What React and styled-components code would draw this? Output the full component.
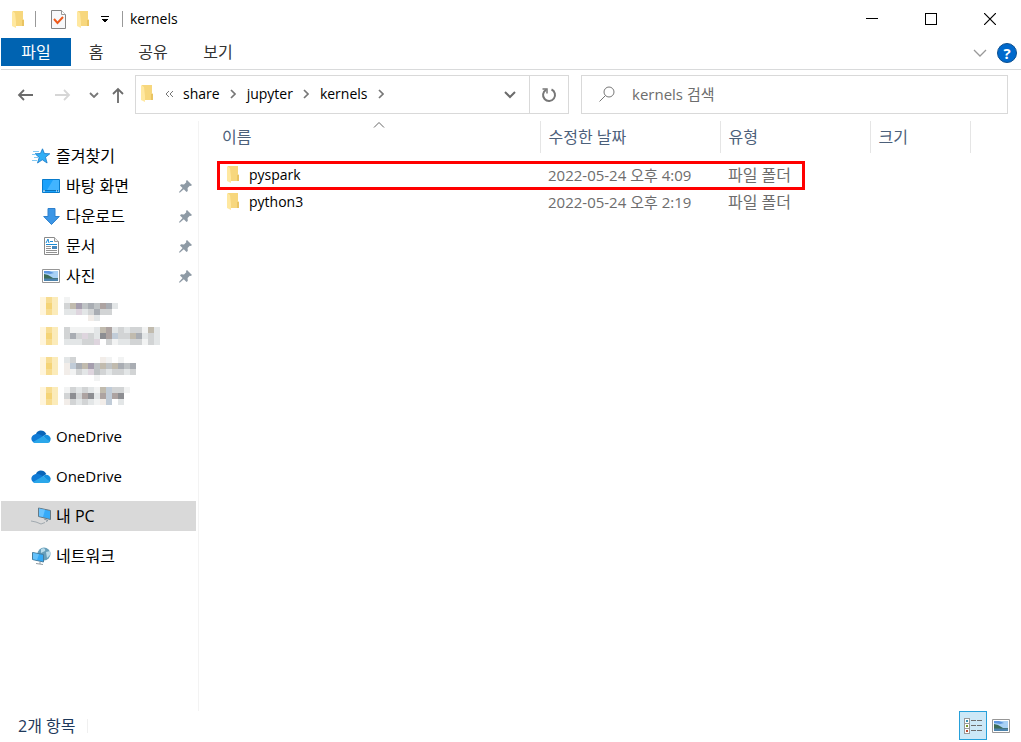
import React from "react";
import styled, { createGlobalStyle } from "styled-components";

const GlobalStyle = createGlobalStyle`
  *, *::after { box-sizing: border-box; }
  body {
    margin: 0;
    background: #fff;
    color: #000;
    font-family: "Open Sans", "Noto Sans CJK KR", sans-serif;
    font-size: 15px;
    line-height: 20px;
  }
  button, input { font: inherit; color: inherit; }
`;

const Window = styled.div`
  display: flex;
  flex-direction: column;
  min-height: 100vh;
  padding-left: 1px;
`;

const PlainButton = styled.button`
  display: flex;
  align-items: center;
  justify-content: center;
  flex: none;
  padding: 0;
  border: 0;
  background: none;
`;

/* Title bar */
const TitleBar = styled.header`
  display: flex;
  align-items: center;
  height: 38px;
  padding: 0 2px 0 10px;
`;
const QuickButton = styled(PlainButton)`
  width: ${(p) => p.$width}px;
  height: 24px;
`;
const Divider = styled.span`
  width: 1px;
  height: 16px;
  margin: 0 ${(p) => p.$right}px 0 ${(p) => p.$left}px;
  background: #999;
`;
const Title = styled.h1`
  flex: 1;
  margin: 0;
  font-size: 14px;
  font-weight: 400;
`;
const CaptionButton = styled(PlainButton)`
  width: 59px;
  height: 38px;
`;

/* Ribbon tabs */
const Ribbon = styled.div`
  display: flex;
  align-items: flex-start;
  height: 32px;
  border-bottom: 1px solid #d9dadb;
`;
const RibbonTab = styled(PlainButton)`
  width: ${(p) => p.$width}px;
  height: 28px;
  font-size: 16px;
  color: ${(p) => (p.$file ? "#fff" : "#333")};
  background: ${(p) => (p.$file ? "#0063b1" : "none")};
`;
const RibbonTools = styled.div`
  display: flex;
  align-items: center;
  gap: 10px;
  height: 30px;
  margin-left: auto;
  padding-right: 4px;
`;
const HelpButton = styled(PlainButton)`
  width: 20px;
  height: 20px;
  border: 1px solid #0c4f8f;
  border-radius: 50%;
  background: #0069cc;
  color: #fff;
  font-size: 15px;
  font-weight: 700;
`;

/* Address row */
const AddressRow = styled.div`
  display: flex;
  align-items: center;
  padding: 5px 13px 0 8px;
`;
const NavButton = styled(PlainButton)`
  width: ${(p) => p.$width}px;
  height: 37px;
`;
const AddressBox = styled.div`
  display: flex;
  flex: 432 1 0;
  height: 39px;
  margin-right: 12px;
  border: 1px solid #d9d9d9;
`;
const Crumbs = styled.nav`
  display: flex;
  align-items: center;
  flex: 1;
  padding: 0 0 2px 5px;
`;
const Crumb = styled.a`
  color: #000;
  font-size: 14px;
  text-decoration: none;
`;
const CrumbIcon = styled.span`
  display: flex;
  justify-content: center;
  width: ${(p) => p.$width}px;
`;
const RefreshButton = styled(PlainButton)`
  width: 39px;
  border-left: 1px solid #d9d9d9;
`;
const SearchBox = styled.label`
  display: flex;
  align-items: center;
  flex: 408 1 0;
  height: 39px;
  padding: 0 0 2px 17px;
  gap: 17px;
  border: 1px solid #d9d9d9;
`;
const SearchInput = styled.input`
  flex: 1;
  min-width: 0;
  padding: 0;
  border: 0;
  outline: 0;
  background: none;
  &::placeholder { color: #6d6d6d; opacity: 1; }
`;

/* Body */
const Body = styled.div`
  display: flex;
  flex: 1;
  padding-top: 7px;
`;
const Sidebar = styled.nav`
  flex: none;
  width: 198px;
  padding: 20px 2px 0 0;
  border-right: 1px solid #f3f3f3;
`;
const NavGroup = styled.div`
  margin-bottom: 10px;
`;
const NavItem = styled.a`
  display: flex;
  align-items: center;
  height: 30px;
  padding: 0 4px 0 ${(p) => (p.$sub ? 39 : 29)}px;
  color: #000;
  text-decoration: none;
  font-size: ${(p) => (p.$latin ? 15 : 16)}px;
  background: ${(p) => (p.$selected ? "#d9d9d9" : "none")};
`;
const NavIcon = styled.span`
  display: flex;
  justify-content: center;
  flex: none;
  width: 22px;
  margin-right: 4px;
`;
const NavLabel = styled.span`
  flex: 1;
`;

/* File list */
const Files = styled.main`
  flex: 1;
  min-width: 0;
`;
const FileTable = styled.table`
  table-layout: fixed;
  width: 771px;
  border-collapse: collapse;
`;
const HeadCell = styled.th`
  position: relative;
  width: ${(p) => p.$width}px;
  height: 32px;
  padding: 0 0 0 ${(p) => (p.$first ? 23 : 8)}px;
  border-right: 1px solid #e5e5e5;
  color: #4c607a;
  font-size: 16px;
  font-weight: 400;
  text-align: left;
`;
const SortMark = styled.span`
  position: absolute;
  top: 1px;
  left: 51%;
  display: flex;
`;
const Spacer = styled.tr`
  height: 8px;
`;
const FileRow = styled.tr`
  position: relative;
  height: 27px;
  &::after {
    content: ${(p) => (p.$marked ? '""' : "none")};
    position: absolute;
    top: 0;
    left: 18px;
    width: 588px;
    height: 29px;
    border: 3px solid #f00;
  }
`;
const Cell = styled.td`
  padding: 0 0 0 ${(p) => (p.$first ? 28 : 8)}px;
  color: ${(p) => (p.$first ? "#000" : "#6d6d6d")};
  font-size: ${(p) => (p.$korean ? 16 : 15)}px;
  white-space: nowrap;
`;
const FileName = styled.span`
  display: flex;
  align-items: center;
  gap: 9px;
  font-size: 14px;
`;

/* Status bar */
const StatusBar = styled.footer`
  display: flex;
  align-items: center;
  height: 31px;
  padding: 0 6px 2px 17px;
`;
const Count = styled.span`
  padding-right: 12px;
  border-right: 1px solid #f0f0f0;
  color: #1e395b;
  font-size: 16px;
  line-height: 14px;
`;
const Views = styled.div`
  display: flex;
  align-items: center;
  margin-left: auto;
`;
const ViewButton = styled(PlainButton)`
  width: 28px;
  height: 29px;
  border: 1px solid ${(p) => (p.$active ? "#26a0da" : "transparent")};
  background: ${(p) => (p.$active ? "#cce8f7" : "none")};
`;

/* Icons */
const Folder = () => (
  <svg width="13" height="17" viewBox="0 0 13 17" aria-hidden="true">
    <path d="M1 0h10v8l1 1v6H3z" fill="#f7d77d" />
    <path d="M10 9h2v6h-2z" fill="#e9c463" />
    <path d="M0 0l3 2 1 9v6l-4-2z" fill="#ffe8a0" />
  </svg>
);
const CheckDoc = () => (
  <svg width="15" height="19" viewBox="0 0 15 19" aria-hidden="true">
    <path d="M.5.500h10l4 4v14H.5z" fill="#f7f8fa" stroke="#858585" />
    <path d="M10.500.500v4h4" fill="#fff" stroke="#999" />
    <path d="M3 9l3.500 4 5.500-6" fill="none" stroke="#ee5a1c" strokeWidth="2" />
  </svg>
);
const Lines = ({ w, h, d, color, weight = 1 }) => (
  <svg width={w} height={h} viewBox={`0 0 ${w} ${h}`} fill="none" stroke={color} strokeWidth={weight} aria-hidden="true">
    <path d={d} />
  </svg>
);
const Crisp = ({ w, h, children }) => (
  <svg width={w} height={h} viewBox={`0 0 ${w} ${h}`} shapeRendering="crispEdges" aria-hidden="true">
    {children}
  </svg>
);
const CrumbArrow = () => <Lines w={6} h={10} d="M1 1l4 4-4 4" color="#777" weight={1.7} />;

const Star = () => (
  <svg width="20" height="16" viewBox="0 0 20 16" aria-hidden="true">
    <path d="M11.500.800l1.900 4.700 5.400.3-4.300 3.400 1.600 5.800-4.800-3.200-4.800 3.200 1.700-5.600L4 5.800l5.400-.3z" fill="#31aef5" stroke="#1577c6" strokeWidth="0.8" />
    <path d="M2 3.500h6M1 6.500h4M3 9.500h4M1 12.500h5" stroke="#83c9f3" strokeWidth="1" />
  </svg>
);
const Desktop = () => (
  <svg width="18" height="14" viewBox="0 0 18 14" aria-hidden="true">
    <path d="M.5.5h17v13H.5z" fill="#1aa1fb" stroke="#087bcb" />
    <path d="M11 1h6v10H5z" fill="#42b4ff" />
    <path d="M1 11.5h16" stroke="#0870b7" />
    <path d="M1 12h2M14 12h1M16 12h1" stroke="#fff" />
  </svg>
);
const Download = () => (
  <svg width="17" height="17" viewBox="0 0 17 17" aria-hidden="true">
    <path d="M5 .5h7v8h4.300l-7.800 8-7.800-8H5z" fill="#3c96e6" stroke="#2e80cc" />
  </svg>
);
const Document = () => (
  <svg width="15" height="18" viewBox="0 0 15 18" aria-hidden="true">
    <path d="M.5.5h10l4 4v13H.5z" fill="#fff" stroke="#8a8a8a" />
    <path d="M10.500 .5v4h4" fill="#eee" stroke="#999" />
    <path d="M2 6l2-4 1 4M6 4.500h3M2 7.500h11" fill="none" stroke="#1a8ad4" />
    <path d="M2 9.500h5M2 11.500h5M2 13.500h11M2 15.500h11" stroke="#929292" />
    <path d="M8 9h5v3H8z" fill="#4687bb" />
  </svg>
);
const Picture = () => (
  <svg width="18" height="14" viewBox="0 0 18 14" aria-hidden="true">
    <path d="M.5.5h17v13H.5z" fill="#fff" stroke="#969696" />
    <path d="M2 2h14v10H2z" fill="#a9d2f6" />
    <path d="M2 2h5l5 2-4 1-6-1z" fill="#5e97e0" />
    <path d="M2 5l4 1 5 3h5v1H2z" fill="#3c6c58" />
    <path d="M2 9.500h14V12H2z" fill="#4c83ad" />
  </svg>
);
const Pin = () => (
  <svg width="13" height="13" viewBox="0 0 13 13" aria-hidden="true">
    <path d="M8 0l5 5-1.200 1-1-.3-2.200 2.300.2 3L7.500 12 4.800 9.200 1 12.500H0V12l3.600-3.900L1 5.400l1-1.200 3 .2 2.300-2.200L7 1z" fill="#8e9aa5" />
  </svg>
);
const Cloud = () => (
  <svg width="20" height="13" viewBox="0 0 20 13" aria-hidden="true">
    <path d="M5 4C6-.5 13-1 15.300 4L11 7z" fill="#0865b9" />
    <path d="M4 13C-.5 12-1 6 3.500 4.400 6 3 8.500 3.800 12 6.300L8 11z" fill="#0f7bd6" />
    <path d="M12 6.300C14 3.500 19 4.500 19.600 8.500c.2 1.500-.5 3-1.600 4z" fill="#1490df" />
    <path d="M2 12l10-5.700 7 5.200c-.8 1-1.600 1.500-2.800 1.500H4.500c-1 0-1.900-.4-2.500-1z" fill="#2ba7ea" />
  </svg>
);
const Computer = () => (
  <svg width="21" height="18" viewBox="0 0 21 18" aria-hidden="true">
    <path d="M7.500 1l12 2.500v9l-12-3z" fill="#35aaf8" stroke="#667985" />
    <path d="M8 1.500l6 1.300-2 7.200-4-1z" fill="#67c3ff" />
    <path d="M13 12l4 1.500-2 1" fill="none" stroke="#8b979f" />
    <path d="M0 14l5 1 5 2 4-1.500" fill="none" stroke="#a1a9af" />
  </svg>
);
const Network = () => (
  <svg width="19" height="18" viewBox="0 0 19 18" aria-hidden="true">
    <circle cx="12" cy="7" r="6.500" fill="#679eb9" />
    <path d="M9 2c3-2 5 0 4 2l-4 2zM14 5l4-1v4l-3 3z" fill="#b9dceb" />
    <path d="M.5 5.500L11.500 7.500v7.500L.5 12.500z" fill="#34a9f5" stroke="#447d9f" />
    <path d="M1 6l6 1.200L5 13l-4-1z" fill="#65c2fb" />
    <path d="M4 16.500l7 1M8 15v2" stroke="#929da4" />
  </svg>
);
const Magnifier = () => (
  <svg width="16" height="16" viewBox="0 0 16 16" fill="none" stroke="#777" aria-hidden="true">
    <circle cx="10" cy="6" r="5" />
    <path d="M6.500 9.500L.5 15.500" />
  </svg>
);
const Refresh = () => (
  <svg width="16" height="16" viewBox="0 0 16 16" fill="none" stroke="#777" strokeWidth="2" aria-hidden="true">
    <path d="M10.500 2.500a6 6 0 1 1-5.500.3" />
    <path d="M1.500 2H6v4.500" strokeWidth="1.500" />
  </svg>
);
const DetailsIcon = () => (
  <Crisp w={18} h={16}>
    {[["#3b8fb0", 0], ["#7b9a2c", 5], ["#bd4a30", 10]].map(([color, y]) => (
      <g key={y}>
        <rect x="0.5" y={y + 0.5} width="5" height="5" fill="#fff" stroke="#999" />
        <rect x="2" y={y + 2} width="2" height="2" fill={color} />
        <path d={`M7 ${y + 2.5}h5M13 ${y + 2.5}h5`} stroke="#6d6d6d" />
      </g>
    ))}
  </Crisp>
);

/* Censored sidebar entries: each string is a row of 6px blocks, "." is empty */
const TONES = {
  a: "#f2f3f3", b: "#e3e6e7", c: "#d2d4d5", d: "#bfc3c5", e: "#a9adb3", f: "#8d8e92",
  w: "#f2ede9", y: "#c1bbae", p: "#a59eae", l: "#ded5de", r: "#ada3a1", u: "#c1ccd8",
};
const CENSORED = [
  ["a", "cypdedreb", "bblbcecc", "....wb"],
  ["caaaabyrbcbccayb", "ceclcbfruccyebcb", "bbbccl.cabbccacb"],
  ["bc....wa.a", "wueypdydyede", "wacbldcbccbc", ".....a"],
  ["acbcbayucca", "cfcrfbrurf", "wcbcbawu.b"],
];
const Mosaic = ({ rows }) => (
  <Crisp w={120} h={24}>
    {[0, 6, 12].map((y) => (
      <g key={y}>
        <rect x="0" y={y} width="6" height="6" fill="#fff5dc" />
        <rect x="6" y={y} width="6" height="6" fill={y === 6 ? "#f5d477" : "#f7dc91"} />
        <rect x="12" y={y} width="6" height="6" fill="#fbebba" />
      </g>
    ))}
    {rows.map((row, y) =>
      [...row].map((tone, x) =>
        tone === "." ? null : (
          <rect key={`${x}-${y}`} x={24 + x * 6} y={y * 6} width="6" height="6" fill={TONES[tone]} />
        )
      )
    )}
  </Crisp>
);
const MosaicRow = styled.div`
  height: 30px;
  padding: 6px 0 0 39px;
`;

const PINNED = [
  ["바탕 화면", Desktop],
  ["다운로드", Download],
  ["문서", Document],
  ["사진", Picture],
];
const PLACES = [
  { label: "OneDrive", icon: Cloud, latin: true },
  { label: "OneDrive", icon: Cloud, latin: true },
  { label: "내 PC", icon: Computer, selected: true },
  { label: "네트워크", icon: Network },
];
const FILES = [
  { name: "pyspark", date: "2022-05-24 오후 4:09", marked: true },
  { name: "python3", date: "2022-05-24 오후 2:19" },
];

export default function App() {
  return (
    <Window>
      <GlobalStyle />
      <TitleBar>
        <QuickButton $width={15} aria-label="폴더"><Folder /></QuickButton>
        <Divider $left={9} $right={14} />
        <QuickButton $width={16} aria-label="속성"><CheckDoc /></QuickButton>
        <QuickButton $width={35} aria-label="새 폴더"><Folder /></QuickButton>
        <QuickButton $width={8} aria-label="빠른 실행 사용자 지정">
          <Crisp w={8} h={8}>
            <path d="M0 1h8v1H0zM1 4h6v1H1zM2 5h4v1H2zM3 6h2v1H3z" />
          </Crisp>
        </QuickButton>
        <Divider $left={13} $right={7} />
        <Title>kernels</Title>
        <CaptionButton aria-label="최소화">
          <Crisp w={12} h={12}><path d="M0 5h12v1H0z" /></Crisp>
        </CaptionButton>
        <CaptionButton aria-label="최대화">
          <Crisp w={12} h={12}><path d="M.5.5h11v11H.5z" fill="none" stroke="#000" /></Crisp>
        </CaptionButton>
        <CaptionButton aria-label="닫기">
          <Lines w={12} h={12} d="M0 0l12 12M12 0L0 12" color="#000" weight={1.2} />
        </CaptionButton>
      </TitleBar>

      <Ribbon>
        <RibbonTab $file $width={70}>파일</RibbonTab>
        <RibbonTab $width={50}>홈</RibbonTab>
        <RibbonTab $width={64}>공유</RibbonTab>
        <RibbonTab $width={66}>보기</RibbonTab>
        <RibbonTools>
          <PlainButton aria-label="리본 확장">
            <Lines w={14} h={8} d="M1 1l6 6 6-6" color="#999" weight={1.3} />
          </PlainButton>
          <HelpButton aria-label="도움말">?</HelpButton>
        </RibbonTools>
      </Ribbon>

      <AddressRow>
        <NavButton $width={31} aria-label="뒤로">
          <Lines w={16} h={12} d="M7 1L2 6l5 5M2 6h14" color="#6b6b6b" weight={1.8} />
        </NavButton>
        <NavButton $width={46} aria-label="앞으로">
          <Lines w={16} h={12} d="M9 1l5 5-5 5M14 6H0" color="#d6d6d6" weight={1.8} />
        </NavButton>
        <NavButton $width={15} aria-label="최근 위치">
          <Lines w={10} h={6} d="M1 1l4 4 4-4" color="#777" weight={1.8} />
        </NavButton>
        <NavButton $width={34} aria-label="위로">
          <Lines w={12} h={16} d="M1 7l5-5 5 5M6 2v14" color="#6b6b6b" weight={1.8} />
        </NavButton>
        <AddressBox>
          <Crumbs aria-label="경로">
            <Folder />
            <CrumbIcon $width={29}>
              <Lines w={8} h={6} d="M4 0L1 3l3 3M8 0L5 3l3 3" color="#777" />
            </CrumbIcon>
            <Crumb href="#share">share</Crumb>
            <CrumbIcon $width={27}><CrumbArrow /></CrumbIcon>
            <Crumb href="#jupyter">jupyter</Crumb>
            <CrumbIcon $width={27}><CrumbArrow /></CrumbIcon>
            <Crumb href="#kernels">kernels</Crumb>
            <CrumbIcon $width={27}><CrumbArrow /></CrumbIcon>
          </Crumbs>
          <NavButton $width={38} aria-label="이전 위치">
            <Lines w={12} h={8} d="M1 1l5 5 5-5" color="#6b6b6b" weight={2} />
          </NavButton>
          <RefreshButton aria-label="새로 고침"><Refresh /></RefreshButton>
        </AddressBox>
        <SearchBox>
          <Magnifier />
          <SearchInput type="text" aria-label="kernels 검색" placeholder="kernels 검색" />
        </SearchBox>
      </AddressRow>

      <Body>
        <Sidebar aria-label="탐색 창">
          <NavGroup>
            <NavItem href="#quick">
              <NavIcon><Star /></NavIcon>
              <NavLabel>즐겨찾기</NavLabel>
            </NavItem>
            {PINNED.map(([label, Icon]) => (
              <NavItem key={label} href={`#${label}`} $sub>
                <NavIcon><Icon /></NavIcon>
                <NavLabel>{label}</NavLabel>
                <Pin />
              </NavItem>
            ))}
            {CENSORED.map((rows, i) => (
              <MosaicRow key={i}><Mosaic rows={rows} /></MosaicRow>
            ))}
          </NavGroup>
          {PLACES.map(({ label, icon: Icon, latin, selected }, i) => (
            <NavGroup key={i}>
              <NavItem href={`#place-${i}`} $latin={latin} $selected={selected}>
                <NavIcon><Icon /></NavIcon>
                <NavLabel>{label}</NavLabel>
              </NavItem>
            </NavGroup>
          ))}
        </Sidebar>
        <Files>
          <FileTable>
            <thead>
              <tr>
                <HeadCell $first $width={341}>
                  이름
                  <SortMark><Lines w={12} h={6} d="M1 5.5l5-5 5 5" color="#666" /></SortMark>
                </HeadCell>
                <HeadCell $width={180}>수정한 날짜</HeadCell>
                <HeadCell $width={150}>유형</HeadCell>
                <HeadCell $width={100}>크기</HeadCell>
              </tr>
            </thead>
            <tbody>
              <Spacer />
              {FILES.map(({ name, date, marked }) => (
                <FileRow key={name} $marked={marked}>
                  <Cell $first><FileName><Folder />{name}</FileName></Cell>
                  <Cell>{date}</Cell>
                  <Cell $korean>파일 폴더</Cell>
                  <Cell />
                </FileRow>
              ))}
            </tbody>
          </FileTable>
        </Files>
      </Body>

      <StatusBar>
        <Count>2개 항목</Count>
        <Views>
          <ViewButton $active aria-label="자세히"><DetailsIcon /></ViewButton>
          <ViewButton aria-label="큰 아이콘"><Picture /></ViewButton>
        </Views>
      </StatusBar>
    </Window>
  );
}
